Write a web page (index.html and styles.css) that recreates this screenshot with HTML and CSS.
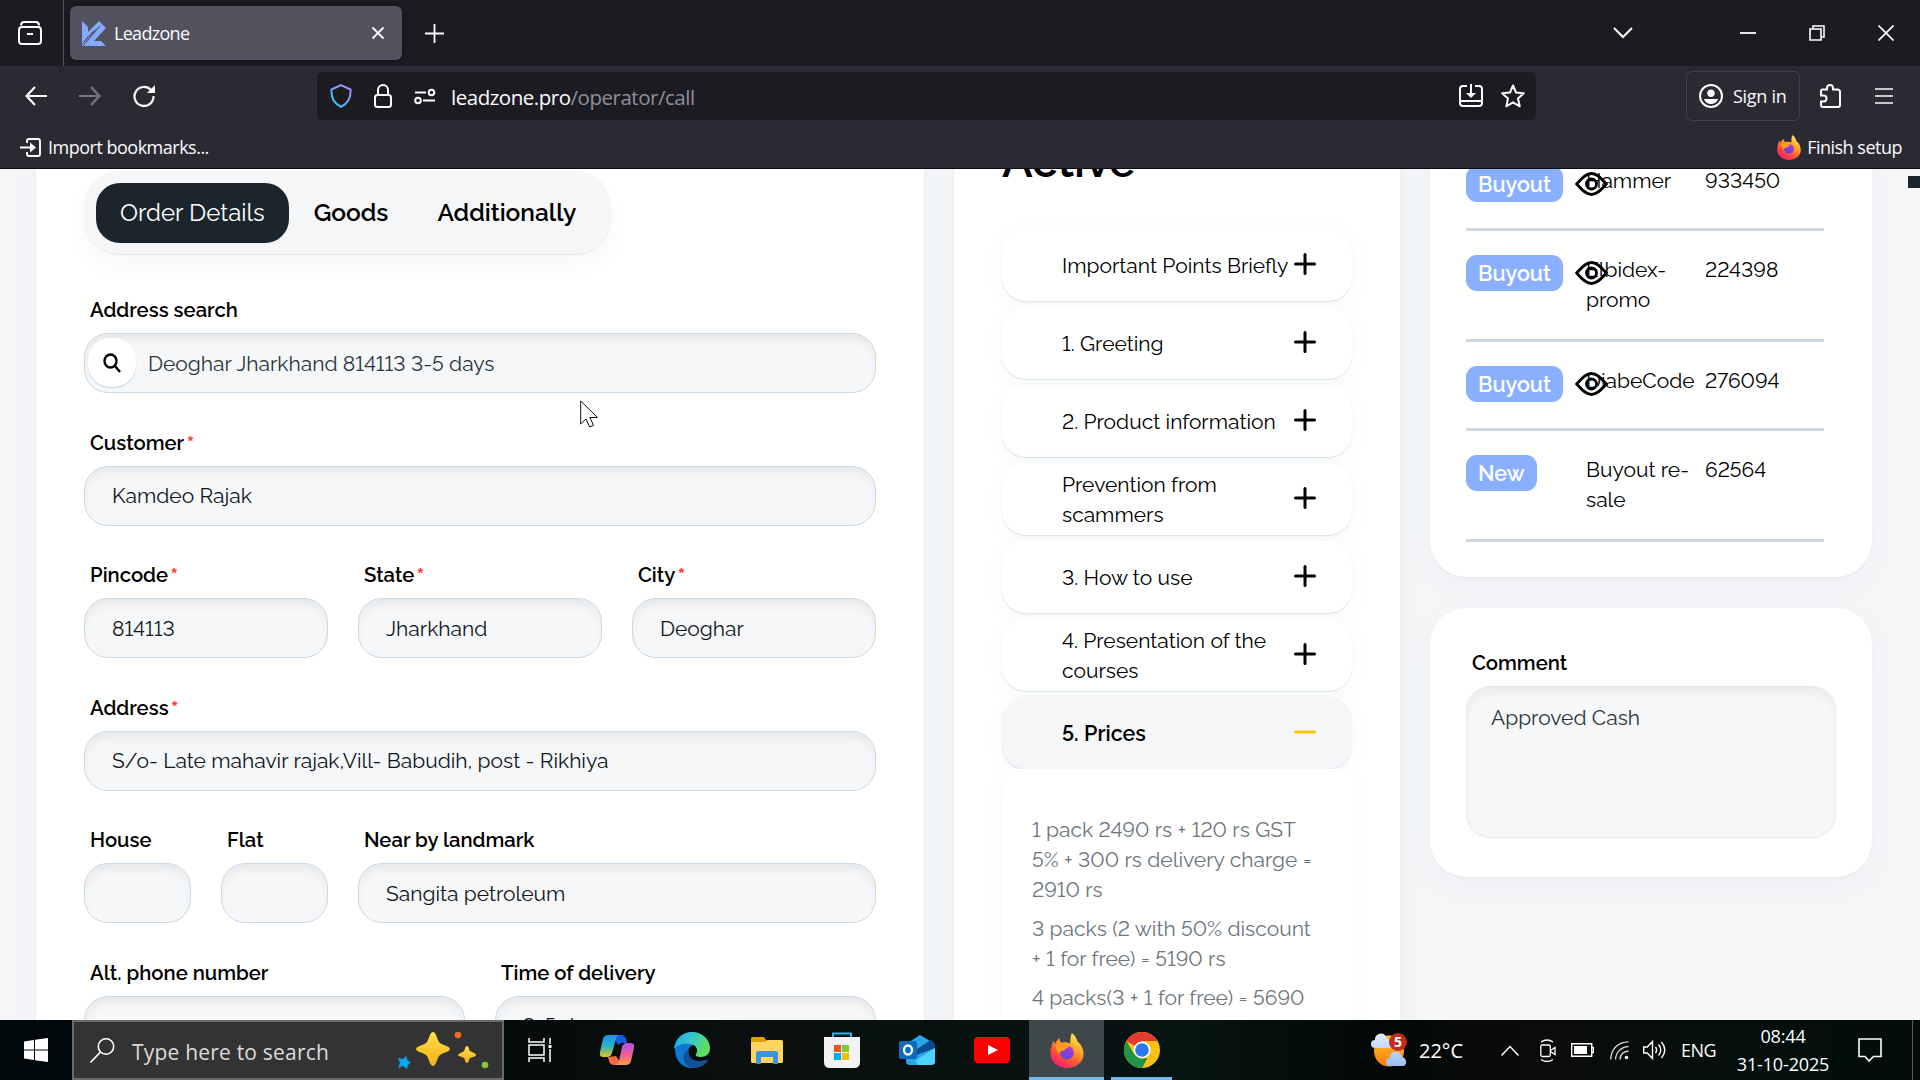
FILE: index.html
```html
<!doctype html>
<html lang="en">
  <head>
    <meta charset="UTF-8" />
    <meta name="viewport" content="width=device-width, initial-scale=1.0"/>
    <title>Leadzone</title>
    <link rel="stylesheet" href="styles.css">
  </head>
  <body>
    <svg class="defs" width="0" height="0">
      <defs>
        <linearGradient id="shieldGrad" x1="1" y1="0" x2="0" y2="1">
          <stop offset="0" stop-color="#b18cff"/><stop offset=".5" stop-color="#6ba6f5"/><stop offset="1" stop-color="#1fd6ff"/>
        </linearGradient>
        <linearGradient id="fxBody" x1=".8" y1="0" x2=".2" y2="1">
          <stop offset="0" stop-color="#fff44f"/><stop offset=".35" stop-color="#ffa82a"/><stop offset=".65" stop-color="#ff5634"/><stop offset="1" stop-color="#f2147c"/>
        </linearGradient>
        <linearGradient id="fxGlobe" x1=".7" y1="0" x2=".3" y2="1">
          <stop offset="0" stop-color="#b833e1"/><stop offset="1" stop-color="#5a4bd0"/>
        </linearGradient>
        <linearGradient id="copA" x1="0" y1="0" x2="0" y2="1">
          <stop offset="0" stop-color="#2391f0"/><stop offset=".5" stop-color="#25b3c4"/><stop offset="1" stop-color="#e8c51e"/>
        </linearGradient>
        <linearGradient id="copB" x1="0" y1="0" x2="0" y2="1">
          <stop offset="0" stop-color="#a855e8"/><stop offset=".5" stop-color="#ee5a96"/><stop offset="1" stop-color="#ff9a4a"/>
        </linearGradient>
        <linearGradient id="edgeTop" x1="0" y1="0" x2="1" y2=".4">
          <stop offset="0" stop-color="#1fa5e4"/><stop offset=".5" stop-color="#35c3d2"/><stop offset="1" stop-color="#5fe05a"/>
        </linearGradient>
        <linearGradient id="starGrad" x1="0" y1="0" x2="0" y2="1">
          <stop offset="0" stop-color="#ffde4a"/><stop offset="1" stop-color="#f5b014"/>
        </linearGradient>
        <linearGradient id="sunGrad" x1="0" y1="0" x2="0" y2="1">
          <stop offset="0" stop-color="#ffc52e"/><stop offset="1" stop-color="#f57c0a"/>
        </linearGradient>
        <linearGradient id="cloudGrad" x1="0" y1="0" x2="0" y2="1">
          <stop offset="0" stop-color="#e3edfd"/><stop offset="1" stop-color="#9dbdf0"/>
        </linearGradient>
        <symbol id="firefox" viewBox="0 0 34 36">
          <path fill="url(#fxBody)" d="M22 0c5 4 5 7 6 9 4 3 6 8 6 13 0 8-8 14-17 14S0 30 0 21c0-6 2-10 3-13l2 3c1-3 3-4 4-6 0 3 1 4 3 5 3-1 6 0 8 1 1-4 0-7 2-11z"/>
          <circle cx="17" cy="20" r="7" fill="url(#fxGlobe)"/>
          <path fill="#ff9a1f" d="M5 12c4-2 6-1 8 1 2-1 5 0 6 1-1 2-4 2-5 4-2 0-4 1-5 3-3-2-4-6-4-9z"/>
        </symbol>
        <symbol id="eye" viewBox="0 0 33 24">
          <path fill="none" stroke="#000" stroke-width="2.8" stroke-linejoin="round" d="M1.6 12C6 7.500 10 1.500 16.500 1.500S27 7.500 31.400 12C27 16.500 23 22.500 16.500 22.500S6 16.500 1.600 12z"/>
          <circle cx="16.500" cy="12" r="5" fill="none" stroke="#000" stroke-width="2.800"/>
        </symbol>
        <symbol id="plus" viewBox="0 0 22 22">
          <path d="M11 1.500v19M1.500 11h19" stroke="#000" stroke-width="3" stroke-linecap="round"/>
        </symbol>
      </defs>
    </svg>

    <header class="browser">
      <div class="tabbar">
        <div class="tab-view">
          <svg width="24" height="26" viewBox="0 0 24 26" fill="none" stroke="#fbfbfe" stroke-width="2"><path d="M3 5.500C3 3 4 2 6 2h12c2 0 3 1 3 3.500"/><rect x="1" y="7" width="22" height="17" rx="3"/><path d="M9 14h6"/></svg>
        </div>
        <div class="tab">
          <svg width="24" height="25" viewBox="0 0 24 25" fill="#85aaff"><path d="M0 0l6 6v9L0 23z"/><path d="M17 0l7 7-12 13h7l5 5H0v-1L17 6l-7 5-4 5V11z"/><path d="M1 25L18 5" stroke="#52525e" stroke-width="1"/></svg>
          <span class="tab-title">Leadzone</span>
          <svg class="tab-close" width="14" height="14" viewBox="0 0 14 14" stroke="#fbfbfe" stroke-width="1.800"><path d="M1.500 1.500l11 11M12.500 1.500l-11 11"/></svg>
        </div>
        <svg class="new-tab" width="19" height="19" viewBox="0 0 19 19" stroke="#fbfbfe" stroke-width="1.800"><path d="M9.500 0v19M0 9.500h19"/></svg>
        <div class="window-controls">
          <svg width="20" height="12" viewBox="0 0 20 12" fill="none" stroke="#fbfbfe" stroke-width="2"><path d="M1 1l9 9 9-9"/></svg>
          <svg width="16" height="16" viewBox="0 0 16 16" stroke="#fff" stroke-width="1.800"><path d="M0 8h16"/></svg>
          <svg width="16" height="16" viewBox="0 0 16 16" fill="none" stroke="#fff" stroke-width="1.600"><path d="M1 4h11v11H1zM4 4V1h11v11h-3"/></svg>
          <svg width="16" height="16" viewBox="0 0 16 16" stroke="#fff" stroke-width="1.600"><path d="M.5.5l15 15M15.500.5l-15 15"/></svg>
        </div>
      </div>
      <div class="toolbar">
        <div class="nav-buttons">
          <svg width="22" height="20" viewBox="0 0 22 20" fill="none" stroke="#fbfbfe" stroke-width="2.200"><path d="M22 10H2M10 1L1.500 10l8.500 9"/></svg>
          <svg width="22" height="20" viewBox="0 0 22 20" fill="none" stroke="#77767e" stroke-width="2.200"><path d="M0 10h20M12 1l8.500 9-8.500 9"/></svg>
          <svg class="reload" width="22" height="22" viewBox="0 0 22 22" fill="none" stroke="#fbfbfe" stroke-width="2.200"><path d="M18 5a9.500 9.500 0 1 0 2.500 6"/><path d="M22 0v8h-8z" fill="#fbfbfe" stroke="none"/></svg>
        </div>
        <div class="urlbar">
          <svg width="22" height="24" viewBox="0 0 22 24" fill="none" stroke="url(#shieldGrad)" stroke-width="2"><path d="M11 1.200L20.500 5.500c.6 8-2.500 14-9.500 17.300C4 19.500.9 13.500 1.500 5.500z"/></svg>
          <svg width="18" height="24" viewBox="0 0 18 24" fill="none" stroke="#fbfbfe" stroke-width="2"><rect x="1" y="11" width="16" height="12" rx="2.500"/><path d="M4 11V6a5 5 0 0 1 10 0v5"/></svg>
          <svg width="22" height="17" viewBox="0 0 22 17" fill="none" stroke="#fbfbfe" stroke-width="2"><circle cx="17.500" cy="4.500" r="2.800"/><path d="M1 4.500h11M9 12.500h12"/><circle cx="4" cy="12.500" r="2.800"/></svg>
          <span class="url">leadzone.pro<span>/operator/call</span></span>
          <svg class="push" width="24" height="24" viewBox="0 0 24 24" fill="none" stroke="#fbfbfe" stroke-width="2"><path d="M8 2H4Q1 2 1 5v14q0 3 3 3h16q3 0 3-3V5q0-3-3-3h-4M1 17h22M12 0v11"/><path d="M7 9h10l-5 5z" fill="#fbfbfe" stroke="none"/></svg>
          <svg width="24" height="24" viewBox="0 0 24 24" fill="none" stroke="#fbfbfe" stroke-width="2" stroke-linejoin="round"><path d="M12 1.500l3 7 7.800.7-5.800 5.300 1.700 7.800L12 18.300l-6.700 4 1.700-7.800L1.200 9.200 9 8.500z"/></svg>
        </div>
        <div class="sign-in">
          <svg width="24" height="24" viewBox="0 0 24 24" fill="#fbfbfe"><circle cx="12" cy="12" r="11" fill="none" stroke="#fbfbfe" stroke-width="2"/><circle cx="12" cy="9.200" r="3.700"/><path d="M5 15h14c-1 3.500-4 5-7 5s-6-1.500-7-5z"/></svg>
          <span>Sign in</span>
        </div>
        <svg class="puzzle" width="21" height="24" viewBox="0 0 21 24" fill="none" stroke="#fbfbfe" stroke-width="2"><path d="M1 9V7q0-1.500 1.500-1.500H7V4a3 3 0 0 1 6 0v1.500h4.500Q20 5.500 20 8v13q0 2-2 2H3q-2 0-2-2v-3.500h2.500a3 3 0 0 0 0-6H1z"/></svg>
        <svg class="menu" width="18" height="16" viewBox="0 0 18 16" stroke="#fbfbfe" stroke-width="1.700"><path d="M0 1h18M0 8h18M0 15h18"/></svg>
      </div>
      <div class="bookmarks">
        <svg width="21" height="19" viewBox="0 0 21 19" fill="none" stroke="#fbfbfe" stroke-width="1.900"><path d="M7 5V3q0-2 2-2h9q2 0 2 2v13q0 2-2 2H9q-2 0-2-2v-2M0 9.500h13"/><path d="M10 4.500v10l6-5z" fill="#fbfbfe" stroke="none"/></svg>
        <span>Import bookmarks...</span>
        <svg class="push" width="24" height="25"><use href="#firefox"/></svg>
        <span class="finish">Finish setup</span>
      </div>
    </header>

    <main class="page">
      <div class="columns">
        <section class="card order">
          <nav class="pills">
            <a class="pill active">Order Details</a>
            <a class="pill">Goods</a>
            <a class="pill">Additionally</a>
          </nav>
          <form class="form">
            <div class="field w12 search">
              <label>Address search</label>
              <div class="search-box">
                <span class="search-icon"><svg width="18" height="20" viewBox="0 0 18 20" fill="none" stroke="#000" stroke-width="2.400"><ellipse cx="7.500" cy="8" rx="6" ry="6.500"/><path d="M12 13l5 6"/></svg></span>
                <input type="text" value="Deoghar Jharkhand 814113 3-5 days">
              </div>
            </div>
            <div class="field w12">
              <label>Customer<sup>*</sup></label>
              <input type="text" value="Kamdeo Rajak">
            </div>
            <div class="field w4">
              <label>Pincode<sup>*</sup></label>
              <input type="text" value="814113">
            </div>
            <div class="field w4">
              <label>State<sup>*</sup></label>
              <input type="text" value="Jharkhand">
            </div>
            <div class="field w4">
              <label>City<sup>*</sup></label>
              <input type="text" value="Deoghar">
            </div>
            <div class="field w12">
              <label>Address<sup>*</sup></label>
              <input type="text" value="S/o- Late mahavir rajak,Vill- Babudih, post - Rikhiya">
            </div>
            <div class="field w2">
              <label>House</label>
              <input type="text">
            </div>
            <div class="field w2">
              <label>Flat</label>
              <input type="text">
            </div>
            <div class="field w8">
              <label>Near by landmark</label>
              <input type="text" value="Sangita petroleum">
            </div>
            <div class="field w6">
              <label>Alt. phone number</label>
              <input type="text">
            </div>
            <div class="field w6">
              <label>Time of delivery</label>
              <input type="text" value="3-5 days">
            </div>
          </form>
        </section>

        <section class="card script">
          <h2>Active</h2>
          <div class="item"><span>Important Points Briefly</span><svg width="22" height="22"><use href="#plus"/></svg></div>
          <div class="item"><span>1. Greeting</span><svg width="22" height="22"><use href="#plus"/></svg></div>
          <div class="item"><span>2. Product information</span><svg width="22" height="22"><use href="#plus"/></svg></div>
          <div class="item"><span>Prevention from<br>scammers</span><svg width="22" height="22"><use href="#plus"/></svg></div>
          <div class="item"><span>3. How to use</span><svg width="22" height="22"><use href="#plus"/></svg></div>
          <div class="item"><span>4. Presentation of the<br>courses</span><svg width="22" height="22"><use href="#plus"/></svg></div>
          <div class="item open"><span>5. Prices</span><svg width="22" height="22" viewBox="0 0 22 22"><path d="M1.500 11h19" stroke="#ffc400" stroke-width="3" stroke-linecap="round"/></svg></div>
          <div class="answer">
            <p>1 pack 2490 rs + 120 rs GST<br>5% + 300 rs delivery charge =<br>2910 rs</p>
            <p>3 packs (2 with 50% discount<br>+ 1 for free) = 5190 rs</p>
            <p>4 packs(3 + 1 for free) = 5690<br>rs</p>
          </div>
        </section>

        <div class="side">
          <section class="card history">
            <div class="row">
              <div class="status"><span class="badge">Buyout</span><svg class="eye" width="33" height="24"><use href="#eye"/></svg></div>
              <div>Hammer</div>
              <div>933450</div>
            </div>
            <div class="row">
              <div class="status"><span class="badge">Buyout</span><svg class="eye" width="33" height="24"><use href="#eye"/></svg></div>
              <div>Elbidex-<br>promo</div>
              <div>224398</div>
            </div>
            <div class="row">
              <div class="status"><span class="badge">Buyout</span><svg class="eye" width="33" height="24"><use href="#eye"/></svg></div>
              <div>DiabeCode</div>
              <div>276094</div>
            </div>
            <div class="row">
              <div class="status"><span class="badge">New</span></div>
              <div>Buyout re-<br>sale</div>
              <div>62564</div>
            </div>
          </section>
          <section class="card comment">
            <label>Comment</label>
            <textarea>Approved Cash</textarea>
          </section>
        </div>
      </div>
      <div class="scroll-thumb"></div>
    </main>

    <footer class="taskbar">
      <div class="start">
        <svg width="24" height="24" viewBox="0 0 24 24" fill="#fff"><path d="M0 3.500L10 2v9.500H0zM11 1.800L24 0v11.500H11zM0 12.500h10V22L0 20.500zM11 12.500h13V24l-13-1.800z"/></svg>
      </div>
      <div class="search-bar">
        <svg width="25" height="25" viewBox="0 0 25 25" fill="none" stroke="#fff" stroke-width="1.600"><circle cx="16" cy="8.500" r="7.700"/><path d="M10.500 14L.5 24.500"/></svg>
        <span>Type here to search</span>
        <svg class="sparkles" width="92" height="38" viewBox="0 0 92 38"><path fill="url(#starGrad)" d="M35 1c3 0 4 7 6 10s11 4 11 7-9 4-11 7-3 10-6 10-4-7-6-10-11-4-11-7 9-4 11-7 3-10 6-10z"/><path fill="url(#starGrad)" d="M69 15c2 0 2 4 3 5s6 2 6 4-5 2-6 3-1 5-3 5-2-4-3-5-6-2-6-3 5-3 6-4 1-5 3-5z"/><path fill="#0aa6f5" d="M8 25l2 5 3 1-3 3-1 4-4-3-5 2 2-5-2-5 5 1z"/><circle cx="60" cy="4" r="3.300" fill="#f4681f"/><circle cx="87" cy="34" r="3.300" fill="#87c440"/></svg>
      </div>
      <div class="app task-view">
        <svg width="24" height="24" viewBox="0 0 24 24" fill="none" stroke="#fff" stroke-width="1.500"><path d="M1 0v4h15V0M1 24v-4h15v4M1 7h15v10H1zM22 0v6M22 11v13"/><path d="M20.500 7h3v3h-3z" fill="#fff" stroke="none"/></svg>
      </div>
      <div class="app">
        <svg width="34" height="32" viewBox="0 0 34 32"><path fill="#1b5be0" d="M12 1h9q4 0 5 4l1 4h-6l-3 2z"/><path fill="url(#copA)" d="M8 1h12q-3 0-4 4l-4 14q-1 4-5 4H3q-4 0-3-5L3 5q1-4 5-4z"/><path fill="#f56a48" d="M22 31h-8q-4 0-5-4l-1-4 8-1z"/><path fill="url(#copB)" d="M26 31H15q3 0 4-4l3-14q1-4 5-4h4q4 0 3 5l-3 13q-1 4-5 4z"/></svg>
      </div>
      <div class="app">
        <svg width="36" height="36" viewBox="0 0 36 36"><path fill="#0f78d0" d="M1 14C5 8 16 7 21 13c-8 0-9 9-4 14 5 5 12 4 17 1-4 6-10 8-16 8C8 36 0 28 1 14z"/><path fill="#144f9c" d="M15 17c-2 7 3 12 10 12 4 0 7-2 9-1-3 6-9 8-15 8-9-1-14-13-4-19z"/><path fill="url(#edgeTop)" d="M0 17C1 7 8 0 18 0c11 0 18 8 18 16 0 6-4 9-9 9-4 0-6-1-5-3 3-4 0-10-7-10C8 11 2 14 0 17z"/></svg>
      </div>
      <div class="app">
        <svg width="32" height="27" viewBox="0 0 32 27"><path fill="#e0a106" d="M0 1.500Q0 0 1.500 0H13l2 3v4H0z"/><path fill="#ffd560" d="M0 5h14l2-2h14.500Q32 3 32 4.500v20q0 1.500-1.500 1.500h-29Q0 26 0 24.500z"/><path fill="#3b93dd" d="M5 27V16.500Q5 14 7.500 14h17q2.500 0 2.500 2.500V27h-5v-7H10v7z"/></svg>
      </div>
      <div class="app">
        <svg width="36" height="36" viewBox="0 0 36 36"><path d="M9 8V1.500h18V8" fill="none" stroke="#2fb4e4" stroke-width="2"/><path fill="#f2f2f2" d="M0 5h36v25q0 6-6 6H6q-6 0-6-6z"/><path fill="#f1511b" d="M10 13h7v7h-7z"/><path fill="#80cc28" d="M18 13h7v7h-7z"/><path fill="#00adef" d="M10 21h7v7h-7z"/><path fill="#fbbc09" d="M18 21h7v7h-7z"/></svg>
      </div>
      <div class="app">
        <svg width="36" height="30" viewBox="0 0 36 30"><path fill="#2aa5ea" d="M21 0l15 9v17q0 4-4 4H11q-4 0-4-4V9z"/><path fill="#0b4a94" d="M18 14L32 5l4 4v4L18 20z"/><path fill="#4fd5fb" d="M36 13L16 26l3 4h13q4 0 4-4z"/><rect y="6" width="18" height="18" rx="2" fill="#0f6cbd"/><ellipse cx="9" cy="15" rx="4" ry="4.500" fill="none" stroke="#fff" stroke-width="2.300"/></svg>
      </div>
      <div class="app">
        <svg width="36" height="26" viewBox="0 0 36 26"><rect width="36" height="26" rx="4" fill="#f00"/><path fill="#fff" d="M14 8l10 5-10 5z"/></svg>
      </div>
      <div class="app current">
        <svg width="34" height="35"><use href="#firefox"/></svg>
      </div>
      <div class="app running">
        <svg width="36" height="36" viewBox="0 0 36 36"><circle cx="18" cy="18" r="18" fill="#fbc116"/><path fill="#e33b2e" d="M18 18L2.400 9A18 18 0 0 1 33.600 9H18z"/><path fill="#229342" d="M18 36A18 18 0 0 1 2.400 9l8 13.500 7.600 4 5.500-.5z"/><circle cx="18" cy="18" r="8.500" fill="#fff"/><circle cx="18" cy="18" r="6.800" fill="#2a7bea"/></svg>
      </div>
      <div class="tray">
        <svg class="weather" width="36" height="34" viewBox="0 0 36 34"><ellipse cx="18" cy="18" rx="15" ry="15.500" fill="url(#sunGrad)"/><path fill="url(#cloudGrad)" d="M4 15a4 4 0 0 1 0-8 6 6 0 0 1 12-1 5 5 0 0 1 3 9zM19 33a4 4 0 0 1 0-8 6 6 0 0 1 12-1 5 5 0 0 1 2 9z"/><circle cx="27" cy="9" r="9" fill="#c42b1c"/><text x="27" y="14">5</text></svg>
        <span class="temp">22°C</span>
        <svg class="chevron" width="18" height="11" viewBox="0 0 18 11" fill="none" stroke="#fff" stroke-width="1.500"><path d="M.5 10.500L9 1.500l8.500 9"/></svg>
        <svg class="cam" width="16" height="23" viewBox="0 0 16 23" fill="none" stroke="#fff" stroke-width="1.300"><rect x=".8" y="6" width="9.500" height="11.500" rx="1.500"/><path d="M10.500 11.500l4.500-3v7l-4.500-3M1 3q6-4 12 0M1 20.500q6 4 12 0"/></svg>
        <svg class="battery" width="23" height="14" viewBox="0 0 23 14" fill="none" stroke="#fff" stroke-width="1.400"><path d="M.7.700h20v12.600H.7zM21 4.500h1.500v5H21"/><path d="M3 3h13v8H3z" fill="#fff" stroke="none"/></svg>
        <svg class="wifi" width="19" height="19" viewBox="0 0 19 19" fill="none" stroke="#fff" stroke-width="1.300"><path d="M.8 18.500C1 8 8 1 18.500.8M5.500 18.500C6 11 11 6 18.500 5.500M10 18.500c.3-5 3.500-8 8.500-8.500" opacity=".85"/><circle cx="16.500" cy="16.500" r="1.800" fill="#fff" stroke="none"/></svg>
        <svg class="volume" width="23" height="20" viewBox="0 0 23 20" fill="none" stroke="#fff" stroke-width="1.400"><path d="M.7 7h3.500L9.500 1.500v17L4.200 13H.7zM12.500 7q2.200 3 0 6M15.500 4.500q4.500 5.500 0 11M18.500 2q6.500 8 0 16"/></svg>
        <span class="lang">ENG</span>
        <div class="clock"><span>08:44</span><span>31-10-2025</span></div>
        <svg class="notif" width="24" height="24" viewBox="0 0 24 24" fill="none" stroke="#fff" stroke-width="1.600"><path d="M1 1h22v17.500h-7.500L11 23l-4-4.500H1z"/></svg>
      </div>
    </footer>

    <svg class="cursor" width="19" height="28" viewBox="0 0 19 28"><path d="M.7 1v23l5.300-5 3.700 8 3.800-1.800-3.600-7.700H17.500z" fill="#fff" stroke="#111" stroke-width="1"/></svg>
  </body>
</html>
```

FILE: styles.css
```css
* {
  box-sizing: border-box;
}
body {
  margin: 0;
  width: 1920px;
  height: 1080px;
  overflow: hidden;
  display: flex;
  flex-direction: column;
  font-family: Raleway, Lato, sans-serif;
  font-size: 21px;
  font-variant-numeric: lining-nums;
  line-height: 30px;
  color: #000;
  background-color: #f5f6f8;
}
svg {
  display: block;
  flex: none;
}
.defs {
  position: absolute;
}
.push {
  margin-left: auto;
}

/* browser */
.browser {
  height: 169px;
  flex: none;
  background-color: #2b2a33;
  border-bottom: 1px solid #0c0c0d;
  color: #fbfbfe;
  font-family: "Open Sans", sans-serif;
  font-size: 18px;
}
.tabbar {
  height: 66px;
  display: flex;
  align-items: center;
  background-color: #1c1b22;
}
.tab-view {
  width: 64px;
  height: 66px;
  padding: 20px 0 0 18px;
  border-right: 1px solid #52525e;
}
.tab {
  width: 332px;
  height: 54px;
  margin-left: 6px;
  padding: 0 17px 0 12px;
  display: flex;
  align-items: center;
  border-radius: 6px;
  background-color: #52525e;
  box-shadow: 0 0 4px rgba(0, 0, 0, 0.5);
}
.tab-title {
  margin-left: 8px;
  letter-spacing: -0.7px;
}
.tab-close {
  margin-left: auto;
}
.new-tab {
  margin-left: 23px;
}
.window-controls {
  margin-left: auto;
  margin-right: 26px;
  display: flex;
  align-items: center;
}
.window-controls svg + svg {
  margin-left: 53px;
}
.window-controls svg:nth-child(2) {
  margin-left: 107px;
}
.toolbar {
  height: 60px;
  display: flex;
  align-items: center;
}
.nav-buttons {
  width: 317px;
  padding-left: 25px;
  display: flex;
  align-items: center;
  gap: 32px;
}
.urlbar {
  width: 1219px;
  height: 48px;
  padding: 0 11px 0 13px;
  display: flex;
  align-items: center;
  border-radius: 6px;
  background-color: #1c1b22;
}
.urlbar svg + svg {
  margin-left: 22px;
}
.urlbar .push {
  margin-left: auto;
}
.urlbar .push + svg {
  margin-left: 18px;
}
.url {
  margin: 2px 0 0 15px;
  font-size: 20.5px;
  letter-spacing: -0.48px;
}
.url span {
  color: #8f8f98;
}
.sign-in {
  width: 114px;
  height: 50px;
  margin-left: 150px;
  padding-left: 12px;
  display: flex;
  align-items: center;
  gap: 10px;
  border: 1px solid #42414d;
  border-radius: 6px;
  letter-spacing: -0.3px;
}
.puzzle {
  margin-left: 20px;
}
.menu {
  margin-left: 34px;
}
.bookmarks {
  height: 42px;
  padding: 0 18px 0 20px;
  display: flex;
  align-items: center;
  letter-spacing: -0.5px;
}
.bookmarks span {
  margin-left: 7px;
}
.bookmarks .finish {
  margin-left: 6px;
}

/* page */
.page {
  position: relative;
  flex: 1;
  min-height: 0;
  overflow: hidden;
}
.columns {
  display: grid;
  grid-template-columns: 888px 446px 442px;
  gap: 30px;
  height: 1000px;
  margin: -69px 0 0 36px;
}
.card {
  background-color: #fff;
  box-shadow: 0 1px 2px rgba(0, 0, 0, 0.06), 0 8px 30px rgba(90, 130, 160, 0.05);
}
.order {
  padding: 71px 48px 0;
}
.pills {
  width: 527px;
  height: 83px;
  padding: 12px;
  display: flex;
  border-radius: 36px;
  background-color: #f5f6f8;
  box-shadow: 0 1px 1px rgba(0, 0, 0, 0.08), 0 12px 24px rgba(0, 0, 0, 0.03);
}
.pill {
  height: 60px;
  padding: 0 24px;
  font-size: 24.5px;
  line-height: 59px;
  font-weight: 600;
  white-space: nowrap;
  border-radius: 24px;
}
.pill + .pill {
  padding-left: 25px;
}
.pill.active {
  color: #fff;
  font-size: 24px;
  font-weight: normal;
  background-color: #1b252d;
}
.form {
  margin-top: 39px;
  display: grid;
  grid-template-columns: repeat(12, 38.5px);
  column-gap: 30px;
}
.field {
  height: 132.6px;
}
.w2 {
  grid-column: span 2;
}
.w4 {
  grid-column: span 4;
}
.w6 {
  grid-column: span 6;
}
.w8 {
  grid-column: span 8;
}
.w12 {
  grid-column: span 12;
}
label {
  display: block;
  height: 40px;
  padding-left: 6px;
  font-size: 20.3px;
  line-height: 34px;
  font-weight: 600;
}
label sup {
  margin-left: 2px;
  color: #ff3b30;
  font-size: 25px;
  line-height: 0;
  vertical-align: -3px;
}
input {
  display: block;
  width: 100%;
  height: 60px;
  padding: 0 27px;
  border: 1px solid #cbd9e4;
  border-radius: 24px;
  background-color: #f5f7f9;
  box-shadow: inset 0 8px 8px -2px rgba(0, 0, 0, 0.06);
  font: inherit;
  font-variant-numeric: lining-nums;
  color: #10161b;
}
.search-box {
  position: relative;
}
.search-box input {
  padding-left: 63px;
  color: #2a343c;
}
.search-icon {
  position: absolute;
  left: 4px;
  top: 5px;
  width: 48px;
  height: 49px;
  display: flex;
  align-items: center;
  justify-content: center;
  border-radius: 22px;
  background-color: #fff;
  box-shadow: 0 1px 1px #c4d3df;
}

.script {
  padding: 36px 48px 0;
}
.script h2 {
  height: 93px;
  margin: 0;
  font-size: 45.5px;
  font-weight: 600;
  line-height: 50px;
}
.item {
  height: 72px;
  margin-bottom: 6px;
  padding: 1px 36px 0 60px;
  display: flex;
  align-items: center;
  justify-content: space-between;
  white-space: nowrap;
  border-radius: 24px;
  background-color: #fff;
  box-shadow: 0 1px 1px #dbe2ea, 0 3px 18px rgba(90, 130, 160, 0.06);
}
.item svg {
  margin-bottom: 4px;
}
.item span {
  flex: none;
  width: 231px;
  padding-top: 1px;
}
.item.open {
  margin-bottom: 0;
  background-color: #f5f6f8;
  font-size: 21.5px;
  font-weight: 600;
}
.answer {
  position: relative;
  height: 260px;
  padding: 46px 30px 0;
  background-color: #fff;
  box-shadow: 0 10px 18px rgba(90, 130, 160, 0.06);
  color: #6c757d;
  white-space: nowrap;
}
.answer p {
  margin: 0 0 9px;
}

.history {
  height: 477px;
  padding: 42px 48px 0 36px;
  border-radius: 0 0 36px 36px;
}
.row {
  display: grid;
  grid-template-columns: 120px 119px 1fr;
  padding: 24px 0;
  border-bottom: 3px solid #cbd9e4;
  white-space: nowrap;
}
.status {
  position: relative;
  height: 38px;
}
.badge {
  display: inline-block;
  height: 36px;
  padding: 0 12px;
  border-radius: 11px;
  background-color: #8aafff;
  color: #fff;
  font-size: 21.5px;
  line-height: 37px;
  font-weight: 600;
}
.eye {
  position: absolute;
  left: 109px;
  top: 6px;
}
.comment {
  height: 269px;
  margin-top: 31px;
  padding: 37px 36px 0;
  border-radius: 36px;
}
.comment label {
  height: 41px;
  line-height: 36px;
}
textarea {
  display: block;
  width: 370px;
  height: 152px;
  padding: 16px 24px;
  border: 1px solid #e3eaf0;
  border-radius: 24px;
  resize: none;
  background-color: #f5f7f9;
  box-shadow: inset 0 8px 8px -2px rgba(0, 0, 0, 0.05);
  font: inherit;
  color: #2a343c;
}
.scroll-thumb {
  position: absolute;
  right: 0;
  top: 7px;
  width: 12px;
  height: 12px;
  background-color: #1b252d;
}

/* taskbar */
.taskbar {
  height: 60px;
  flex: none;
  display: flex;
  color: #fff;
  font-family: "Open Sans", sans-serif;
  font-size: 18px;
  background: linear-gradient(90deg, #01080c 0, #050b0b 25%, #0a1010 40%, #061412 62%, #030807 72%, #0b0c09 80%, #03100e 92%, #020d0a 100%);
}
.start {
  width: 72px;
  padding: 18px 24px;
}
.search-bar {
  width: 432px;
  padding: 0 12px 0 16px;
  display: flex;
  align-items: center;
  border: 2px solid #6a6a6a;
  background-color: #333;
  color: #dcdcdc;
  font-size: 21px;
}
.search-bar span {
  margin: 3px 0 0 17px;
  letter-spacing: 0.2px;
  white-space: nowrap;
}
.sparkles {
  margin-left: auto;
}
.app {
  width: 75px;
  display: flex;
  align-items: center;
  justify-content: center;
}
.app.task-view {
  padding-right: 3px;
}
.app.current {
  background-color: #40474a;
  box-shadow: inset 0 -3px #76b9ed;
}
.app.running {
  background: linear-gradient(#76b9ed, #76b9ed) 50% 100% / 61px 3px no-repeat;
}
.tray {
  flex: 1;
  padding-left: 192px;
  display: flex;
  align-items: center;
  border-right: 1px solid #59605f;
  margin-right: 7px;
  white-space: nowrap;
}
.weather text {
  fill: #fff;
  font-size: 14px;
  font-weight: bold;
  text-anchor: middle;
}
.temp {
  width: 82px;
  margin: 2px 0 0 12px;
  font-size: 20px;
}
.chevron {
  margin-right: 21px;
}
.cam {
  margin-right: 15px;
}
.battery {
  margin-right: 16px;
}
.wifi {
  margin-right: 14px;
}
.lang {
  width: 37px;
  margin-left: 15px;
  letter-spacing: -0.5px;
}
.clock {
  width: 110px;
  margin-left: 10px;
  display: flex;
  flex-direction: column;
  text-align: center;
  line-height: 28px;
  letter-spacing: -0.15px;
}
.notif {
  margin-left: 20px;
}
.cursor {
  position: absolute;
  left: 580px;
  top: 400px;
}
```
